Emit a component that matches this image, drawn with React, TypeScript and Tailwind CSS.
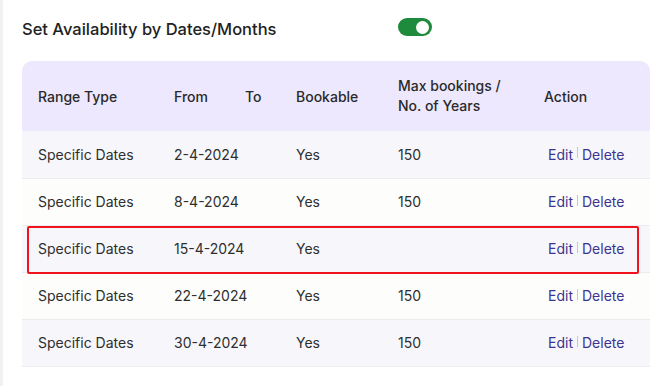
import React, { useState } from 'react';

interface Range {
  id: number;
  type: string;
  from: string;
  bookable: string;
  max: string;
}

const ranges: Range[] = [
  { id: 1, type: 'Specific Dates', from: '2-4-2024', bookable: 'Yes', max: '150' },
  { id: 2, type: 'Specific Dates', from: '8-4-2024', bookable: 'Yes', max: '150' },
  { id: 3, type: 'Specific Dates', from: '15-4-2024', bookable: 'Yes', max: '' },
  { id: 4, type: 'Specific Dates', from: '22-4-2024', bookable: 'Yes', max: '150' },
  { id: 5, type: 'Specific Dates', from: '30-4-2024', bookable: 'Yes', max: '150' },
];

export default function App() {
  const [enabled, setEnabled] = useState(true);

  return (
    <div className="flex h-[386px] w-[653px] bg-white font-['Inter',sans-serif] text-[#2e2e2e]">
      <div className="w-[3px] shrink-0 bg-[#f1f1f1]" />
      <div className="flex-1 pl-[19px] pr-[3px]">
        <div className="flex h-[61px] items-center pb-[3px]">
          <h2 className="w-[376px] text-[16.5px] font-medium text-[#222]">Set Availability by Dates/Months</h2>
          <button
            onClick={() => setEnabled(!enabled)}
            className={`mb-[4px] flex h-[18px] w-[34px] items-center rounded-full px-[3px] ${enabled ? 'justify-end bg-[#1e8a3b]' : 'justify-start bg-gray-300'}`}
          >
            <span className="h-[13px] w-[13px] rounded-full bg-white" />
          </button>
        </div>

        <div className="relative">
          <table className="w-full table-fixed border-collapse text-left text-[14px]">
            <colgroup>
              <col className="w-[136px]" />
              <col className="w-[71px]" />
              <col className="w-[51px]" />
              <col className="w-[102px]" />
              <col className="w-[146px]" />
              <col />
            </colgroup>
            <thead>
              <tr className="h-[70px] bg-[#ede8fd] text-[#2a2a2a]">
                <th className="rounded-tl-[10px] pl-4 font-medium">Range Type</th>
                <th className="pl-4 font-medium">From</th>
                <th className="pl-4 font-medium">To</th>
                <th className="pl-4 font-medium">Bookable</th>
                <th className="pl-4 font-medium leading-[20px]">Max bookings /<br />No. of Years</th>
                <th className="rounded-tr-[10px] pl-4 font-medium">Action</th>
              </tr>
            </thead>
            <tbody>
              {ranges.map((r, i) => (
                <tr
                  key={r.id}
                  className={`h-[47px] border-b border-[#ececef] ${i % 2 === 0 ? 'bg-[#f7f7fb]' : 'bg-[#fdfdfc]'}`}
                >
                  <td className="pl-4">{r.type}</td>
                  <td className="pl-4" colSpan={2}>{r.from}</td>
                  <td className="pl-4">{r.bookable}</td>
                  <td className="pl-4">{r.max}</td>
                  <td className="pl-5">
                    <div className="flex items-center text-[#3d3390]">
                      <a className="cursor-pointer">Edit</a>
                      <span className="mx-[4px] mb-[3px] h-[11px] w-px bg-[#c8c8c8]" />
                      <a className="cursor-pointer">Delete</a>
                    </div>
                  </td>
                </tr>
              ))}
            </tbody>
          </table>
          {/* highlight around the row missing max bookings */}
          <div className="pointer-events-none absolute left-[5px] top-[165px] h-[48px] w-[612px] rounded-[2px] border-[2.5px] border-[#f0121c]" />
        </div>
      </div>
    </div>
  );
}
